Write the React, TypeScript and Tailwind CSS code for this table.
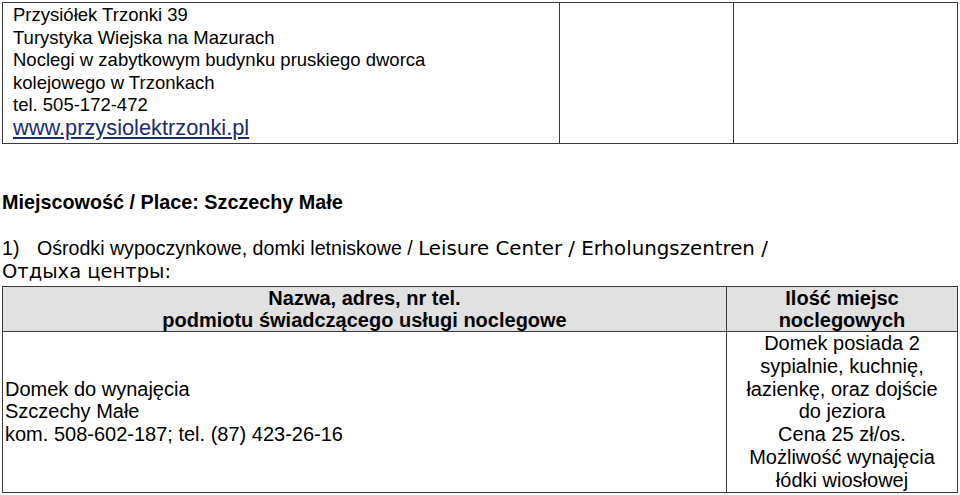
import React from 'react';

const arial = "font-['Liberation_Sans',Arial,sans-serif]";
const verdana = "font-['DejaVu_Sans',Verdana,sans-serif]";

const offerLines = [
  'Domek posiada 2',
  'sypialnie, kuchnię,',
  'łazienkę, oraz dojście',
  'do jeziora',
  'Cena 25 zł/os.',
  'Możliwość wynajęcia',
  'łódki wiosłowej',
];

export default function App() {
  return (
    <div className={`w-[960px] h-[495px] overflow-hidden bg-white text-black ${arial}`}>
      {/* header box */}
      <div className="mx-[2px] mt-[2px] flex h-[142px] border-[1.5px] border-[#3a3a3a]">
        <div className="w-[557px] border-r-[1.5px] border-[#3a3a3a] pl-[10px] pt-[1px] text-[18.5px] leading-[22.5px]">
          <p>Przysiółek Trzonki 39</p>
          <p>Turystyka Wiejska na Mazurach</p>
          <p>Noclegi w zabytkowym budynku pruskiego dworca</p>
          <p>kolejowego w Trzonkach</p>
          <p>tel. 505-172-472</p>
          <a href="#" className="block text-[21.8px] leading-[22px] text-[#1c2c6e] underline underline-offset-2">
            www.przysiolektrzonki.pl
          </a>
        </div>
        <div className="w-[174px] border-r-[1.5px] border-[#3a3a3a]" />
        <div className="flex-1" />
      </div>

      <h2 className="mt-[47px] pl-[2px] text-[19.8px] font-bold leading-[22px]">
        Miejscowość / Place: Szczechy Małe
      </h2>

      <div className="mt-[24px] pl-[2px] text-[19.6px] leading-[23px]">
        <span className="inline-block w-[35px]">1)</span>
        Ośrodki wypoczynkowe, domki letniskowe /{' '}
        <span className={`${verdana} text-[19.8px]`}>Leisure Center / Erholungszentren /</span>
      </div>
      <div className={`pl-[2px] text-[19.5px] leading-[24px] ${verdana}`}>Отдыха центры:</div>

      {/* table */}
      <table className="mx-[2px] mt-[2px] w-[956px] table-fixed border-collapse text-[20px]">
        <thead>
          <tr className="bg-[#e1e1e1] leading-[22px]">
            <th className="w-[724px] border-[1.5px] border-[#3a3a3a] text-center font-bold">
              Nazwa, adres, nr tel.
              <br />
              podmiotu świadczącego usługi noclegowe
            </th>
            <th className="border-[1.5px] border-[#3a3a3a] text-center font-bold">
              Ilość miejsc
              <br />
              noclegowych
            </th>
          </tr>
        </thead>
        <tbody>
          <tr className="leading-[22.8px]">
            <td className="border-[1.5px] border-[#3a3a3a] pl-[2px] align-middle">
              <p>Domek do wynajęcia</p>
              <p>Szczechy Małe</p>
              <p>kom. 508-602-187; tel. (87) 423-26-16</p>
            </td>
            <td className="border-[1.5px] border-[#3a3a3a] text-center align-middle">
              {offerLines.map((line) => (
                <p key={line}>{line}</p>
              ))}
            </td>
          </tr>
        </tbody>
      </table>
    </div>
  );
}
